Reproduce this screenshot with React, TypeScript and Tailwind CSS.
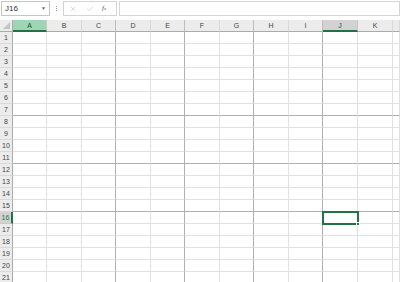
import { X, Check } from 'lucide-react'

const cols = ['A', 'B', 'C', 'D', 'E', 'F', 'G', 'H', 'I', 'J', 'K', '']
const rows = Array.from({ length: 21 }, (_, i) => i + 1)

const darkCols = [2, 4, 6, 8]
const darkRows = [7, 11, 15]

function FormulaBar() {
  return (
    <div className="flex h-[20px] items-start bg-white pt-[1px]">
      <div className="ml-[1px] flex h-[15px] w-[49px] items-center justify-between border border-[#c6c6c6] pl-[3px] pr-[3px]">
        <span className="text-[8px] leading-none text-[#333]">J16</span>
        <span className="text-[5px] leading-none text-[#666]">▼</span>
      </div>
      <div className="flex h-[15px] w-[13px] flex-col items-center justify-center gap-[1px]">
        <span className="h-[1px] w-[1px] bg-[#999]" />
        <span className="h-[1px] w-[1px] bg-[#999]" />
        <span className="h-[1px] w-[1px] bg-[#999]" />
      </div>
      <div className="flex h-[15px] w-[54px] items-center border border-[#d4d4d4] pl-[5px]">
        <X size={8} strokeWidth={1.5} className="text-[#b5b5b5]" />
        <Check size={8} strokeWidth={1.5} className="ml-[9px] text-[#b5b5b5]" />
        <span className="ml-[8px] text-[7px] italic leading-none text-[#555]" style={{ fontFamily: '"Liberation Serif", serif' }}>
          f<span className="text-[5px]">x</span>
        </span>
      </div>
      <div className="ml-[2px] h-[15px] flex-1 border border-[#d4d4d4]" />
    </div>
  )
}

function ColHeader({ label, idx }: { label: string; idx: number }) {
  if (label === 'A') {
    return (
      <div className="flex items-center justify-center border-b-2 border-r border-b-[#217346] border-r-[#c9c9c9] bg-[#9fd5b7] text-[#1e4d33]">
        {label}
      </div>
    )
  }
  if (label === 'J') {
    return (
      <div className="flex items-center justify-center border-b-2 border-r border-b-[#217346] border-r-[#c9c9c9] bg-[#d2d2d2] text-[#444]">
        {label}
      </div>
    )
  }
  return (
    <div
      className={`flex items-center justify-center border-b border-r border-b-[#ababab] bg-[#ececec] text-[#444] ${
        darkCols.includes(idx) ? 'border-r-[#bdbdbd]' : 'border-r-[#d9d9d9]'
      }`}
    >
      {label}
    </div>
  )
}

export default function App() {
  return (
    <div className="h-[282px] w-[400px] overflow-hidden bg-white" style={{ fontFamily: '"Liberation Sans", Arial, sans-serif' }}>
      <FormulaBar />
      <div className="grid auto-rows-[12px] grid-cols-[13px_34px_35px_34px_35px_34px_35px_34px_35px_34px_35px_35px_1fr] text-[7px] leading-none">
        <div className="relative border-b border-r border-b-[#ababab] border-r-[#ababab] bg-[#ececec]">
          <div className="absolute bottom-[2px] right-[2px] h-[7px] w-[7px] bg-[#c4c4c4] [clip-path:polygon(100%_0,100%_100%,0_100%)]" />
        </div>
        {cols.map((c, i) => (
          <ColHeader key={'h' + i} label={c} idx={i} />
        ))}
        {rows.map((r) => {
          const darkRow = darkRows.includes(r)
          const selRow = r === 16
          return [
            <div
              key={'r' + r}
              className={
                selRow
                  ? 'flex items-center justify-center border-b border-r-2 border-b-[#c9c9c9] border-r-[#217346] bg-[#d2d2d2] text-[#217346]'
                  : 'flex items-center justify-center border-b border-r border-b-[#d9d9d9] border-r-[#ababab] bg-[#ececec] text-[#444]'
              }
            >
              {r}
            </div>,
            ...cols.map((c, i) => {
              const darkCol = darkCols.includes(i)
              return (
                <div
                  key={r + '-' + i}
                  className={`relative border-b border-r ${darkRow ? 'border-b-[#b0b0b0]' : 'border-b-[#e1e1e1]'} ${
                    darkCol ? 'border-r-[#b0b0b0]' : 'border-r-[#e1e1e1]'
                  }`}
                >
                  {c === 'J' && selRow && (
                    <>
                      <div className="absolute -left-[1px] -top-[1px] z-10 h-[14px] w-[37px] border-2 border-[#217346]" />
                      <div className="absolute -bottom-[3px] -right-[3px] z-20 h-[4px] w-[4px] border border-white bg-[#217346]" />
                    </>
                  )}
                </div>
              )
            }),
          ]
        })}
      </div>
    </div>
  )
}
